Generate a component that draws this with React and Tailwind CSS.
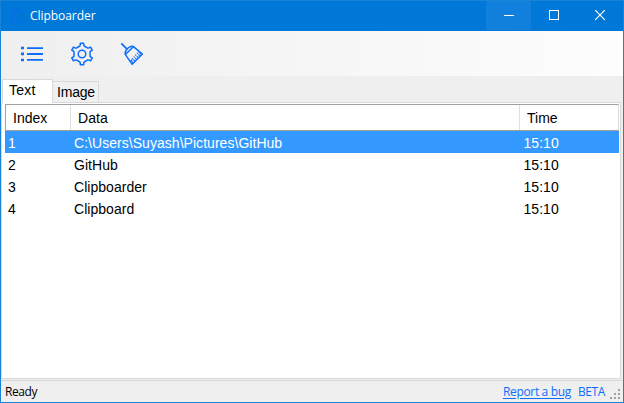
const rows = [
  ['1', 'C:\\Users\\Suyash\\Pictures\\GitHub', '15:10'],
  ['2', 'GitHub', '15:10'],
  ['3', 'Clipboarder', '15:10'],
  ['4', 'Clipboard', '15:10'],
];

// Six teeth, each a flared knob on a wide hexagonal body.
const gearPoints = [0, 60, 120, 180, 240, 300]
  .flatMap((turn) => [[8.3, -15], [9.6, -10], [11, -9], [11, 9], [9.6, 10], [8.3, 15]].map(([r, a]) => {
    const angle = ((turn + a - 90) * Math.PI) / 180;
    return `${(12 + r * Math.cos(angle)).toFixed(2)},${(12 + r * Math.sin(angle)).toFixed(2)}`;
  }))
  .join(' ');

function ListIcon() {
  return (
    <svg width="24" height="24" viewBox="0 0 24 24" fill="#0d6efd">
      <path d="M1 4.7h3v2.6H1zM1 10.5h3v2.8H1zM1 16.7h3v2.6H1z" />
      <path d="M7 5.2h16V7H7zM7 11.1h16v1.8H7zM7 17h16v1.8H7z" />
    </svg>
  );
}

function GearIcon() {
  return (
    <svg width="24" height="24" viewBox="0 0 24 24" fill="none" stroke="#0d6efd" strokeWidth="1.5" strokeLinejoin="round">
      <circle cx="12" cy="12" r="3.8" />
      <polygon points={gearPoints} />
    </svg>
  );
}

function BroomIcon() {
  return (
    <svg width="24" height="24" viewBox="0 0 24 24" fill="none" stroke="#0d6efd" strokeWidth="1.45" strokeLinejoin="round">
      <path d="M1.3 1.3L7.3 7.3" strokeWidth="1.7" />
      <path d="M13.2 4.4C10.5 3.4 4.3 7.6 5.2 12.4L12.2 22.3L22.4 12.1z" />
      <path d="M5.4 12.6L13.4 4.8" />
      <path d="M10.8 19l1.5-1.5M13.2 20.8l-2.6-2.6M14.9 19.1l-3-3M16.6 17.4l-3-3M18.3 15.7l-3-3M20 14l-3-3M21.3 12.4l-3-3" strokeWidth="1.1" strokeDasharray="2.3 .7" />
    </svg>
  );
}

export default function App() {
  return (
    <div className="flex h-[403px] w-[624px] flex-col border-x border-b border-[#1883d7] bg-[#efefef] font-['Liberation_Sans',sans-serif] text-black">
      <header className="flex h-[31px] shrink-0 border-t border-[#1883d7] bg-[#0078d7] text-white">
        <div className="flex flex-1 items-center pl-[10px]">
          <svg width="12" height="15" viewBox="0 0 12 15" fill="none" stroke="#046bec">
            <path d="M1.5 2.5h9v11h-9zM4 2V.5h4V3H4z" />
          </svg>
          <span className="ml-[7px] font-['Open_Sans',sans-serif] text-[12px] tracking-[-0.05px]">Clipboarder</span>
        </div>
        <div className="flex h-[29px] w-[45px] justify-center bg-[#1080dc] pt-[14px]"><div className="h-px w-[10px] bg-white" /></div>
        <div className="flex w-[46px] justify-center pt-[9px]"><div className="size-[10px] border border-white" /></div>
        <div className="flex w-[46px] justify-center pt-[9px]">
          <svg width="10" height="10" viewBox="0 0 10 10" stroke="white" strokeWidth="1.2"><path d="M0 0l10 10M10 0L0 10" /></svg>
        </div>
      </header>

      <div className="flex h-[45px] shrink-0 items-center gap-[26px] bg-linear-to-r from-[#efefef] to-[#fdfdfd] pl-[19px]">
        <ListIcon /><GearIcon /><BroomIcon />
      </div>

      <div className="flex h-[27px] shrink-0 items-end pl-px pr-[2px]">
        <div className="flex h-6 w-[51px] items-center border-l border-t border-r border-[#d9d9d9] bg-white pl-[6px] pb-[2px] text-[14px] tracking-[0.2px]">Text</div>
        <div className="flex h-[22px] w-[46px] items-center border-y border-r border-[#d9d9d9] bg-[#f0f0f0] pl-1 text-[14px] tracking-[-0.2px]">Image</div>
        <div className="h-px flex-1 bg-[#d9d9d9]" />
      </div>

      <main className="mr-[2px] h-[276px] shrink-0 border-x border-b border-[#d9d9d9] bg-white pl-[3px] pr-px pt-px">
        <div className="flex h-[27px] border-x border-y border-[#a0a0a0] border-r-[#dcdcdc] text-[14px] leading-[27px]">
          <div className="w-[65px] border-r border-[#dfdfdf] pl-[7px]">Index</div>
          <div className="w-[449px] border-r border-[#dfdfdf] pl-[7px] tracking-[0.1px]">Data</div>
          <div className="pl-[7px]">Time</div>
        </div>
        {rows.map(([index, data, time], i) => (
          <div key={index} className={`flex h-[22px] text-[14px] leading-[24px] tracking-[0.04px] ${i === 0 ? 'bg-[#3399ff] text-white' : ''}`}>
            <div className="w-[69px] pl-[3px]">{index}</div>
            <div className="w-[449.5px]">{data}</div>
            <div>{time}</div>
          </div>
        ))}
      </main>

      <footer className="mt-px flex h-[22px] shrink-0 items-center border-t border-[#d7d7d7] pl-1 pr-[2px] font-['Open_Sans',sans-serif] text-[12px]">
        <span className="tracking-[-0.4px]">Ready</span>
        <a className="ml-auto tracking-[-0.33px] text-[#0d6efd] underline underline-offset-2">Report a bug</a>
        <span className="ml-[7px] tracking-[-0.4px] text-[#0d6efd]">BETA</span>
        <svg className="ml-[4px] mt-[4px]" width="12" height="12" viewBox="0 0 12 12" fill="#a0a0a0" shapeRendering="crispEdges">
          <path d="M9 1h2v2H9zM5 5h2v2H5zM9 5h2v2H9zM1 9h2v2H1zM5 9h2v2H5zM9 9h2v2H9z" />
        </svg>
      </footer>
    </div>
  );
}
